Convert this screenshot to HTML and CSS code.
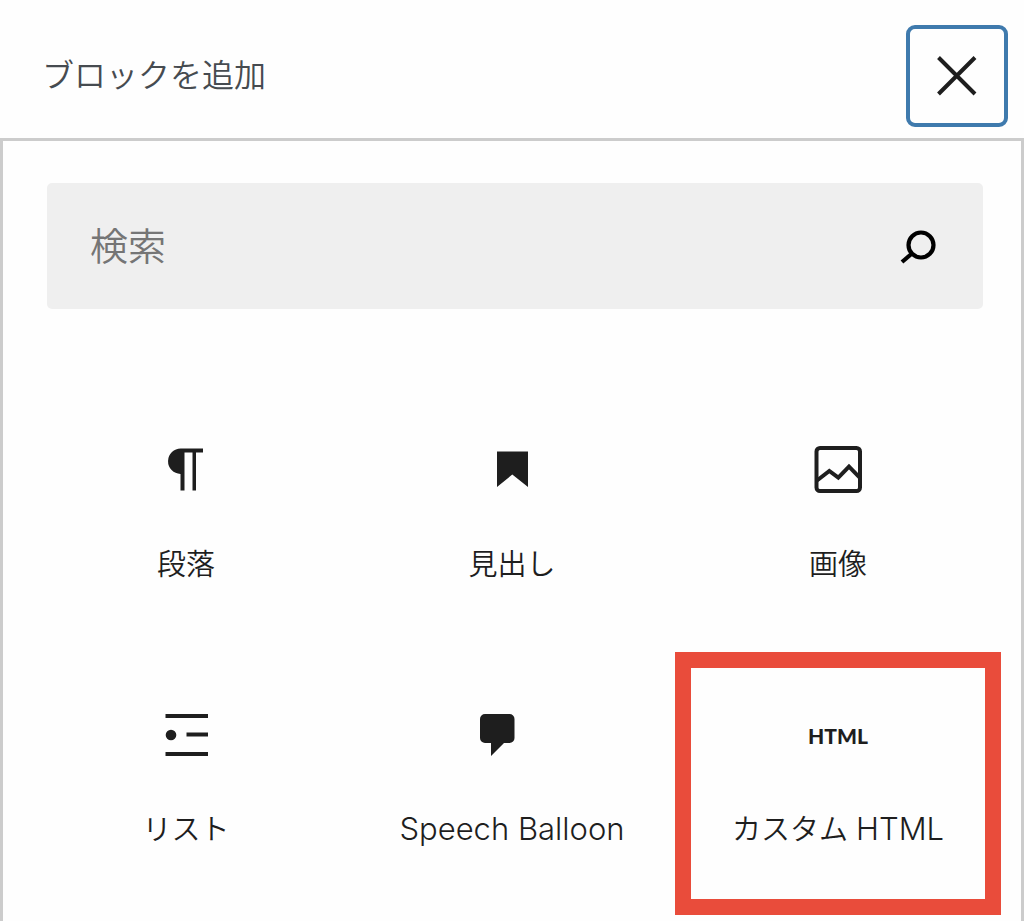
FILE: index.html
```
<!DOCTYPE html>
<html lang="ja">
<head>
    <meta charset="UTF-8">
    <meta name="viewport" content="width=device-width, initial-scale=1.0">
    <title>ブロックを追加</title>
    <link rel="stylesheet" href="styles.css">
</head>
<body>
    <header class="header">
        <h1 class="title">ブロックを追加</h1>
        <button type="button" class="close-btn" aria-label="閉じる">
            <svg width="40" height="40" viewBox="0 0 40 40" fill="none" stroke="#1e1e1e" stroke-width="4">
                <path d="M1.5 1.5L38 38M38 1.5L1.5 38"/>
            </svg>
        </button>
    </header>

    <main class="panel">
        <form class="search">
            <input type="search" class="search-input" placeholder="検索" aria-label="検索">
            <button type="button" class="search-btn" aria-label="検索">
                <svg width="40" height="40" viewBox="0 0 40 40" fill="none" stroke="#000" stroke-width="4.2">
                    <circle cx="21" cy="19" r="12.5"/>
                    <path d="M12 27.5L2 36"/>
                </svg>
            </button>
        </form>

        <div class="blocks">
            <button type="button" class="block">
                <svg class="icon" viewBox="0 0 64 64">
                    <path d="M49 10.5H27a12.7 12.7 0 0 0-.5 25.4V52.5h4v-38h8v38H42v-38h7z"/>
                </svg>
                <span class="label">段落</span>
            </button>
            <button type="button" class="block">
                <svg class="icon" viewBox="0 0 64 64">
                    <path d="M17 13.5h31V49L32.3 36.5 17 49z"/>
                </svg>
                <span class="label">見出し</span>
            </button>
            <button type="button" class="block">
                <svg class="icon icon-line" viewBox="0 0 64 64">
                    <rect x="10.5" y="10" width="43.5" height="43" rx="3.5"/>
                    <path d="M11 42.5L23.3 33l9 6.7L43 28.7l10.5 10.6"/>
                </svg>
                <span class="label">画像</span>
            </button>
            <button type="button" class="block">
                <svg class="icon" viewBox="0 0 64 64">
                    <path d="M11.5 11H54v4H11.5zM32.5 29.5H54v4H32.5zM11.5 49H54v4H11.5z"/>
                    <circle cx="17" cy="32" r="5.3"/>
                </svg>
                <span class="label">リスト</span>
            </button>
            <button type="button" class="block">
                <svg class="icon" viewBox="0 0 64 64">
                    <path d="M5 11h24.5a5 5 0 0 1 5 5v19a5 5 0 0 1-5 5H24L11 53V40H5a5 5 0 0 1-5-5V16a5 5 0 0 1 5-5z"/>
                </svg>
                <span class="label"><span class="latin">Speech Balloon</span></span>
            </button>
            <button type="button" class="block highlight">
                <span class="icon icon-text">HTML</span>
                <span class="label">カスタム <span class="latin">HTML</span></span>
            </button>
        </div>
    </main>
</body>
</html>
```
FILE: styles.css
```
* {
    box-sizing: border-box;
}
body {
    margin: 0;
    min-height: 100vh;
    display: flex;
    flex-direction: column;
    font-family: Inter, "Noto Sans CJK JP", sans-serif;
    font-weight: 350;
    background-color: #fefefe;
    color: #1e1e1e;
}
button {
    font-family: inherit;
    color: inherit;
    background: none;
    cursor: pointer;
}
.header {
    display: flex;
    justify-content: space-between;
    align-items: center;
    padding: 25px 16px 11px 42px;
}
.title {
    margin: 0;
    font-size: 32px;
    font-weight: 350;
    line-height: 48px;
    color: #464b50;
}
.close-btn {
    display: flex;
    justify-content: center;
    align-items: center;
    width: 102px;
    height: 102px;
    padding: 0;
    border: 4px solid #3f7aad;
    border-radius: 9px;
}
.panel {
    flex: 1;
    padding: 42px 20px 0;
    border: 3px solid #ccc;
    border-bottom: none;
}
.search {
    display: flex;
    align-items: center;
    height: 126px;
    margin: 0 18px 78px 24px;
    padding: 0 43px;
    background-color: #efefef;
    border-radius: 5px;
}
.search-input {
    flex: 1;
    min-width: 0;
    height: 100%;
    padding: 0;
    border: none;
    outline: none;
    background: none;
    font-family: inherit;
    font-size: 38px;
    font-weight: 350;
}
.search-input::placeholder {
    color: #757575;
}
.search-btn {
    display: flex;
    padding: 0;
    border: none;
}
.blocks {
    display: grid;
    grid-template-columns: repeat(3, 1fr);
    row-gap: 2px;
}
.block {
    display: flex;
    flex-direction: column;
    align-items: center;
    gap: 42px;
    padding: 35px 0 48px;
    border: 16px solid transparent;
}
.highlight {
    border-color: #e94c3b;
}
.icon {
    width: 64px;
    height: 64px;
    fill: #1e1e1e;
}
.icon-line {
    fill: none;
    stroke: #1e1e1e;
    stroke-width: 4;
}
.icon-text {
    display: flex;
    justify-content: center;
    align-items: center;
    font-family: Lato, sans-serif;
    font-size: 21px;
    font-weight: 900;
}
.label {
    font-size: 29px;
    font-weight: 350;
    line-height: 42px;
    white-space: nowrap;
}
.latin {
    font-size: 31px;
    line-height: 1;
}
```
